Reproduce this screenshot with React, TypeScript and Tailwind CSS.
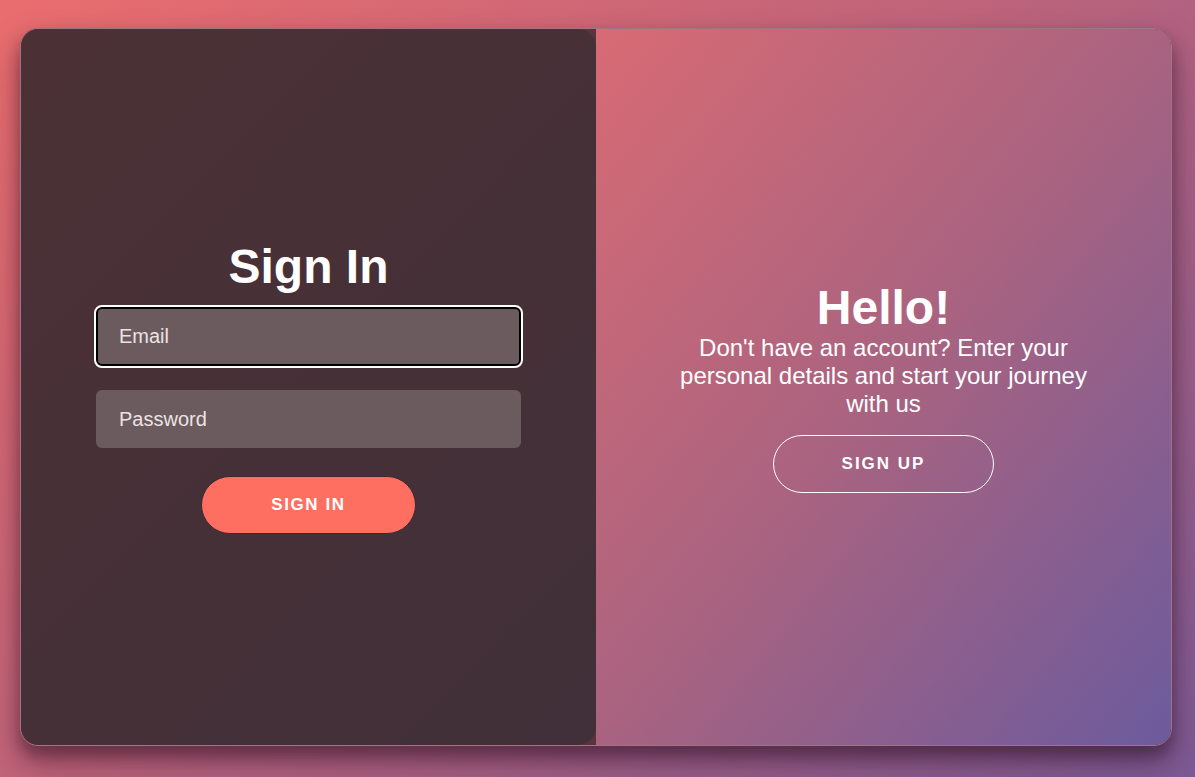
import React from "react";

export default function App() {
  return (
    <div
      className="w-[1195px] h-[777px] pt-[28px] pl-[20px] bg-[linear-gradient(140deg,#ea6d6e_0%,#c0647a_45%,#7c5a94_100%)]"
      style={{ fontFamily: '"Liberation Sans", Arial, sans-serif' }}
    >
      <div className="w-[1152px] h-[718px] rounded-[18px] overflow-hidden flex border border-[#a07484] bg-[#5a343c] shadow-[0_16px_32px_rgba(40,10,30,0.4),0_10px_14px_rgba(40,10,30,0.32)]">
        <div className="w-[575px] h-full shrink-0 rounded-[18px] flex flex-col items-center justify-center bg-[linear-gradient(135deg,#4b3135_0%,#463037_50%,#413039_100%)]">
          <h1 className="text-white font-bold text-[48px] leading-[52px] mb-[14px]">Sign In</h1>
          <div className="w-[425px] h-[59px] rounded-[6px] border-2 border-black outline-2 outline-white bg-[#6b5a5e] flex items-center pl-[21px]">
            <span className="text-[#ebe3e3] text-[20px]">Email</span>
          </div>
          <div className="w-[425px] h-[58px] mt-[24px] rounded-[6px] bg-[#6b5a5e] flex items-center pl-[23px]">
            <span className="text-[#ebe3e3] text-[20px]">Password</span>
          </div>
          <button className="mt-[28px] w-[215px] h-[58px] rounded-full bg-[#ff6f61] border border-[#3a2a30] text-white font-bold text-[17px] tracking-[1.6px]">
            SIGN IN
          </button>
        </div>
        <div className="flex-1 h-full flex flex-col items-center justify-center bg-[linear-gradient(to_bottom_right,#d86b74_0%,#a96380_50%,#6c5b9d_100%)] text-white">
          <h1 className="font-bold text-[48px] leading-[52px]">Hello!</h1>
          <p className="w-[420px] text-center text-[24px] leading-[28px]">
            Don't have an account? Enter your personal details and start your journey with us
          </p>
          <button className="mt-[17px] w-[221px] h-[58px] rounded-full border border-white bg-transparent text-white font-bold text-[17px] tracking-[2px]">
            SIGN UP
          </button>
        </div>
      </div>
    </div>
  );
}
